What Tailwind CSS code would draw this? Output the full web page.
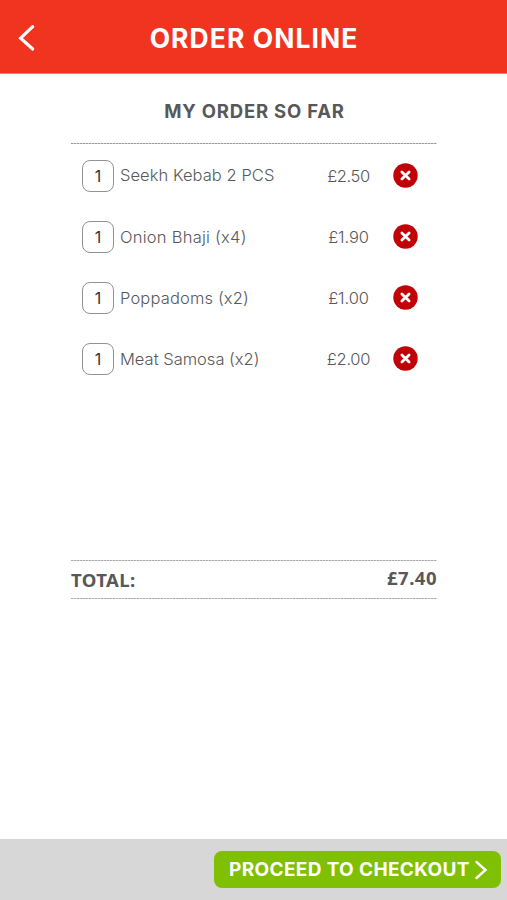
<!DOCTYPE html>
<html lang="en">
<head>
<meta charset="utf-8">
<title>Order Online</title>
<script src="https://cdn.jsdelivr.net/npm/@tailwindcss/browser@4"></script>
</head>
<body class="bg-white">
<div class="flex h-[900px] w-[507px] flex-col overflow-hidden whitespace-nowrap bg-white font-['Inter',sans-serif] text-[#58585a]">
  <header class="grid h-[74px] shrink-0 grid-cols-[60px_1fr_60px] items-center border-b border-[#f47b6b] bg-[#f1341f] text-white">
    <svg class="ml-[18px] mt-0.5 h-[28px] w-[18px]" viewBox="0 0 18 28" fill="none" stroke="currentColor" stroke-width="3.2" stroke-linecap="round"><path d="M14.7 2.6 2.6 14.2 14.7 25"/></svg>
    <h1 class="mt-0.5 pl-px text-center text-[26.5px] font-bold leading-8 tracking-[1.05px]">ORDER ONLINE</h1>
  </header>
  <main class="mx-[71px] flex h-[765px] w-[366px] shrink-0 flex-col">
    <h2 class="flex h-[69px] items-center justify-center pt-[6px] pl-px text-[18.5px] font-bold tracking-[0.8px]">MY ORDER SO FAR</h2>
    <div class="h-px bg-[repeating-linear-gradient(90deg,#999_0_2px,#d0d0d0_2px_3px)]"></div>
    <ul class="h-[416px] pt-px">
      <li class="flex h-[61px] items-center pl-[11px]">
        <span class="flex size-[32px] items-center justify-center rounded-[8px] border-[1.5px] border-[#929292] text-[16px] text-[#333]">1</span>
        <span class="ml-1.5 w-[191px] text-[16.5px] font-light tracking-[0.05px]">Seekh Kebab 2 PCS</span>
        <span class="w-[75px] pt-px text-center text-[16.5px] font-light tracking-[-0.4px]">£2.50</span>
        <svg class="ml-[7px] size-[25px]" viewBox="0 0 25 25"><circle cx="12.5" cy="12.5" r="12.2" fill="#c10206"/><path d="m8.9 8.9 7.2 7.2m0-7.2-7.2 7.2" stroke="#fff" stroke-width="2.8" stroke-linecap="round"/></svg>
      </li>
      <li class="flex h-[61px] items-center pl-[11px]">
        <span class="flex size-[32px] items-center justify-center rounded-[8px] border-[1.5px] border-[#929292] text-[16px] text-[#333]">1</span>
        <span class="ml-1.5 w-[191px] pt-px text-[16.5px] font-light tracking-[0.25px]">Onion Bhaji (x4)</span>
        <span class="w-[75px] pt-px text-center text-[16.5px] font-light tracking-[-0.1px]">£1.90</span>
        <svg class="ml-[7px] size-[25px]" viewBox="0 0 25 25"><circle cx="12.5" cy="12.5" r="12.2" fill="#c10206"/><path d="m8.9 8.9 7.2 7.2m0-7.2-7.2 7.2" stroke="#fff" stroke-width="2.8" stroke-linecap="round"/></svg>
      </li>
      <li class="flex h-[61px] items-center pl-[11px]">
        <span class="flex size-[32px] items-center justify-center rounded-[8px] border-[1.5px] border-[#929292] text-[16px] text-[#333]">1</span>
        <span class="ml-1.5 w-[191px] pt-px text-[16.5px] font-light tracking-[0.15px]">Poppadoms (x2)</span>
        <span class="w-[75px] pt-px text-center text-[16.5px] font-light tracking-[-0.1px]">£1.00</span>
        <svg class="ml-[7px] size-[25px]" viewBox="0 0 25 25"><circle cx="12.5" cy="12.5" r="12.2" fill="#c10206"/><path d="m8.9 8.9 7.2 7.2m0-7.2-7.2 7.2" stroke="#fff" stroke-width="2.8" stroke-linecap="round"/></svg>
      </li>
      <li class="flex h-[61px] items-center pl-[11px]">
        <span class="flex size-[32px] items-center justify-center rounded-[8px] border-[1.5px] border-[#929292] text-[16px] text-[#333]">1</span>
        <span class="ml-1.5 w-[191px] pt-px text-[16.5px] font-light tracking-[0px]">Meat Samosa (x2)</span>
        <span class="w-[75px] pt-px text-center text-[16.5px] font-light tracking-[-0.3px]">£2.00</span>
        <svg class="ml-[7px] size-[25px]" viewBox="0 0 25 25"><circle cx="12.5" cy="12.5" r="12.2" fill="#c10206"/><path d="m8.9 8.9 7.2 7.2m0-7.2-7.2 7.2" stroke="#fff" stroke-width="2.8" stroke-linecap="round"/></svg>
      </li>
    </ul>
    <div class="h-px bg-[repeating-linear-gradient(90deg,#aaa_0_2px,#d8d8d8_2px_3px)]"></div>
    <div class="flex h-[37px] items-center justify-between font-['Noto_Sans',sans-serif] text-[18.5px] font-bold">
      <span class="tracking-[0.4px]">TOTAL:</span>
      <span class="pb-[4px] tracking-[0.5px]">£7.40</span>
    </div>
    <div class="h-px bg-[repeating-linear-gradient(90deg,#aaa_0_2px,#d8d8d8_2px_3px)]"></div>
  </main>
  <footer class="flex h-[61px] shrink-0 items-center justify-end bg-[#d7d7d7] pr-1.5">
    <button class="flex h-[37px] w-[287px] items-center rounded-[8px] bg-[#7fbf04] pl-[15px] text-[19px] font-bold text-white">
      <span class="w-[241px] pt-px text-left tracking-[0.36px]">PROCEED TO CHECKOUT</span>
      <svg class="ml-1 h-5 w-[14px]" viewBox="0 0 14 20" fill="none" stroke="currentColor" stroke-width="2.4" stroke-linecap="round"><path d="m2.5 2 9 8-9 8"/></svg>
    </button>
  </footer>
</div>
</body>
</html>
